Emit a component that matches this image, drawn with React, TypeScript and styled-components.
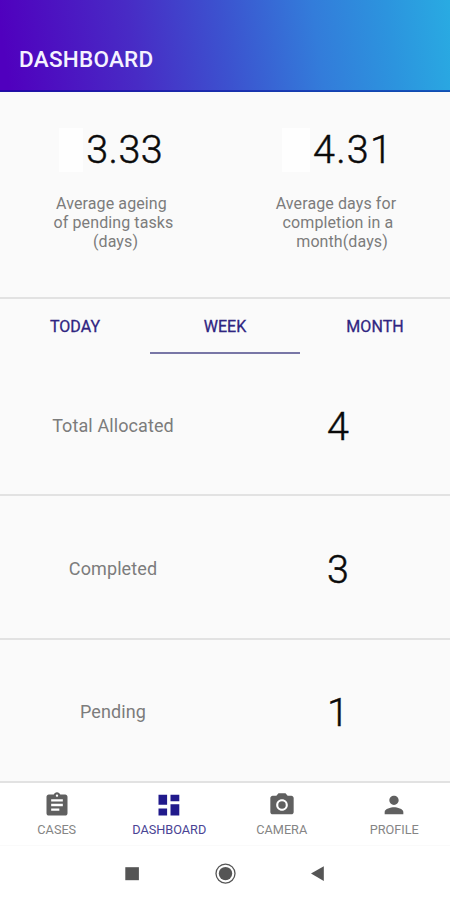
import React from "react";
import styled, { createGlobalStyle } from "styled-components";
import { MdAssignment, MdPerson, MdPhotoCamera } from "react-icons/md";

const GlobalStyle = createGlobalStyle`
  * { box-sizing: border-box; }
  body { margin: 0; background: #fafafa; font-family: Roboto, "Liberation Sans", sans-serif; }
`;

const Screen = styled.div`
  display: flex;
  flex-direction: column;
  width: 450px;
  height: 900px;
  background: #fafafa;
`;

const Header = styled.header`
  height: 92px;
  padding: 45px 19px 0;
  background: linear-gradient(82deg, #5000be 2%, #482bc5 30%, #3c52cf 50%, #337cda 70%, #2c94de 86%, #29abe2 100%);
  box-shadow: inset 0 -1px 0 rgba(0, 60, 150, 0.25), inset 0 -2px 0 rgba(0, 10, 150, 0.5);
`;

const Title = styled.h1`
  margin: 0;
  color: #f5f2ff;
  font-size: 22.5px;
  line-height: 28px;
  font-weight: 500;
  letter-spacing: 0.25px;
`;

const Stats = styled.section`
  display: grid;
  grid-template-columns: 1fr 1fr;
  height: 207px;
  border-bottom: 2px solid #e2e2e2;
`;

const Stat = styled.div`
  display: flex;
  flex-direction: column;
  align-items: center;
  padding-top: 34px;
`;

const StatValue = styled.div<{ $patch: number; $right: number; $spacing: number }>`
  display: flex;
  align-items: center;
  align-self: flex-end;
  gap: 3px;
  height: 48px;
  margin-right: ${(p) => p.$right}px;
  color: #0a0a0a;
  font-size: 39.5px;
  font-weight: 300;
  line-height: 48px;
  letter-spacing: ${(p) => p.$spacing}px;
  -webkit-text-stroke: 0.45px #0a0a0a;

  &::before {
    content: "";
    width: ${(p) => p.$patch}px;
    height: 44px;
    background: #fefefe;
  }
`;

const StatLabel = styled.div<{ $shift: number }>`
  margin: 20px 0 0 ${(p) => p.$shift}px;
  color: #7c7c7c;
  font-size: 16px;
  line-height: 19.2px;
  letter-spacing: 0.1px;
  text-align: center;
  white-space: pre;
`;

const Tabs = styled.nav`
  display: grid;
  grid-template-columns: repeat(3, 1fr);
  height: 55px;
`;

const Tab = styled.button<{ $active?: boolean }>`
  padding: 3px 0 0;
  border: 0;
  border-bottom: 2px solid ${(p) => (p.$active ? "#7876a6" : "transparent")};
  background: none;
  color: #2f2581;
  font: 400 16px/24px Roboto, sans-serif;
  letter-spacing: 0.05px;
  -webkit-text-stroke: 0.3px #2f2581;
`;

const Row = styled.div<{ $height: number }>`
  display: grid;
  grid-template-columns: 226px 224px;
  align-items: center;
  justify-items: center;
  height: ${(p) => p.$height}px;
  border-bottom: 2px solid #e2e2e2;

  &:last-of-type {
    padding-bottom: 1px;
  }
`;

const RowLabel = styled.span`
  padding-top: 3px;
  color: #7c7c7c;
  font-size: 18px;
  line-height: 24px;
  letter-spacing: 0.1px;
`;

const RowValue = styled.span`
  color: #0a0a0a;
  font-size: 39.5px;
  font-weight: 300;
  line-height: 48px;
  padding-top: 5px;
  -webkit-text-stroke: 0.45px #0a0a0a;
`;

const BottomNav = styled.nav`
  display: grid;
  grid-template-columns: repeat(4, 1fr);
  height: 63px;
  background: #fff;
  border-bottom: 1px solid #fafafa;
`;

const NavItem = styled.div<{ $active?: boolean }>`
  display: flex;
  flex-direction: column;
  align-items: center;
  gap: 3px;
  padding: 8px 0 0 1px;
  color: ${(p) => (p.$active ? "#211a8c" : "#606060")};
`;

const NavLabel = styled.span<{ $active?: boolean }>`
  color: ${(p) => (p.$active ? "#4a4494" : "#858585")};
  font-size: 12.7px;
  line-height: 16px;
`;

const SystemBar = styled.footer`
  display: flex;
  align-items: center;
  flex: 1;
  padding: 1px 0 0 124px;
  background: #fff;
`;

const SystemIcons = styled.svg`
  display: block;
`;

const DashboardIcon = () => (
  <svg width="28" height="28" viewBox="0 0 28 28" fill="currentColor">
    <path d="M3.5 3.8h8.6v10H3.5zM15.5 3.8h8.8v6.4h-8.8zM3.5 17.6h8.6v7H3.5zM15.5 13.2h8.8v11.4h-8.8z" />
  </svg>
);

const rows = [
  { label: "Total Allocated", value: "4", height: 142 },
  { label: "Completed", value: "3", height: 144 },
  { label: "Pending", value: "1", height: 143 },
];

export default function App() {
  return (
    <Screen>
      <GlobalStyle />
      <Header>
        <Title>DASHBOARD</Title>
      </Header>
      <Stats>
        <Stat>
          <StatValue $patch={24} $right={62} $spacing={0.4}>3.33</StatValue>
          <StatLabel $shift={2}>{"Average ageing \nof pending tasks\n (days)"}</StatLabel>
        </Stat>
        <Stat>
          <StatValue $patch={28} $right={57} $spacing={1.2}>4.31</StatValue>
          <StatLabel $shift={1}>{"Average days for \ncompletion in a\n  month(days)"}</StatLabel>
        </Stat>
      </Stats>
      <Tabs>
        <Tab>TODAY</Tab>
        <Tab $active>WEEK</Tab>
        <Tab>MONTH</Tab>
      </Tabs>
      {rows.map((row) => (
        <Row key={row.label} $height={row.height}>
          <RowLabel>{row.label}</RowLabel>
          <RowValue>{row.value}</RowValue>
        </Row>
      ))}
      <BottomNav>
        <NavItem>
          <MdAssignment size={28} />
          <NavLabel>CASES</NavLabel>
        </NavItem>
        <NavItem $active>
          <DashboardIcon />
          <NavLabel $active>DASHBOARD</NavLabel>
        </NavItem>
        <NavItem>
          <MdPhotoCamera size={28} />
          <NavLabel>CAMERA</NavLabel>
        </NavItem>
        <NavItem>
          <MdPerson size={28} />
          <NavLabel>PROFILE</NavLabel>
        </NavItem>
      </BottomNav>
      <SystemBar>
        <SystemIcons width="202" height="24" viewBox="0 0 202 24">
          <rect x="1.3" y="5.2" width="13.6" height="13" fill="#555" />
          <circle cx="101.5" cy="11.6" r="9.5" fill="none" stroke="#555" strokeWidth="1.3" />
          <circle cx="101.5" cy="11.6" r="6.7" fill="#555" />
          <path d="M187 11.6 199.8 4.3v14.6z" fill="#555" />
        </SystemIcons>
      </SystemBar>
    </Screen>
  );
}
